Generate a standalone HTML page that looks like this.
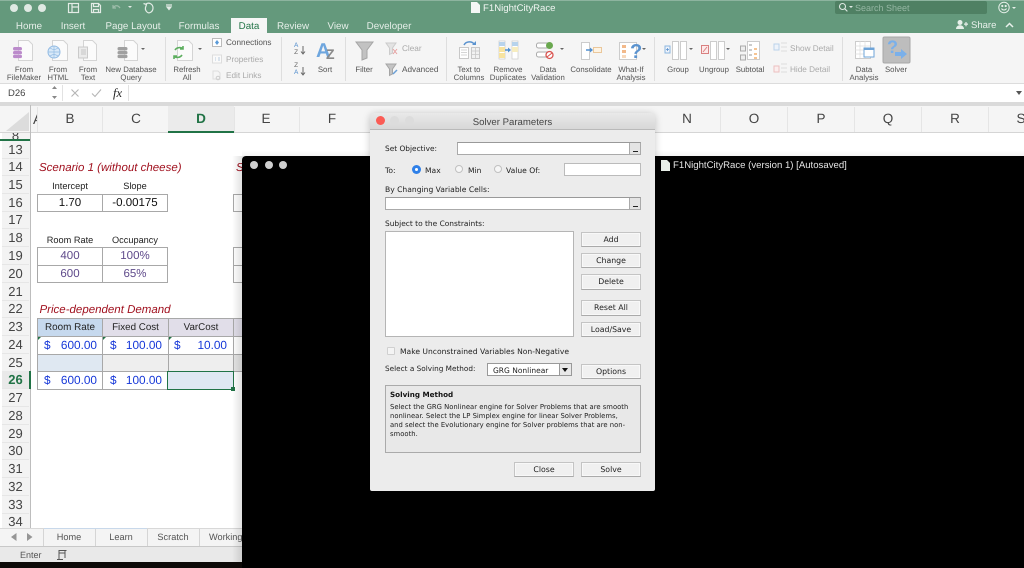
<!DOCTYPE html>
<html><head><meta charset="utf-8"><title>F1NightCityRace</title>
<style>
html{margin:0;padding:0;background:#000}
body{margin:0;padding:0;background:#000;width:1024px;height:568px;overflow:hidden;position:relative;font-family:"Liberation Sans",sans-serif;text-rendering:geometricPrecision;filter:blur(.3px)}
div,span{position:absolute;white-space:nowrap;box-sizing:border-box}
.tab{top:19.500px;font-size:9.800px;color:#e6efe9;transform:translateX(-50%);line-height:13px}
.rb{font-size:7.8px;color:#555;text-align:center;line-height:8.2px;transform:translateX(-50%);top:65.500px;white-space:pre}
.rs{font-size:8.2px;color:#555;line-height:10px}
.dim{color:#aaa}
.sep{top:37px;width:1px;height:44px;background:#dedede}
.ch{top:111px;font-size:13.5px;color:#444;transform:translateX(-50%);line-height:16px}
.rn{left:2px;width:27px;height:18px;text-align:center;font-size:13px;color:#444;line-height:18px;border-bottom:1px solid #e6e6e6}
.c{height:18px;border:1px solid #a8a8a8;font-size:11px;line-height:17px;text-align:center;color:#111;background:#fff}
.hd{line-height:18px}
.h{top:0;font-size:9.2px;color:#222;text-align:center;line-height:11px}
.p{color:#5f4a8b;font-size:11.5px}
.b{color:#1436d8;font-size:11.8px;text-align:right;padding-right:5px;line-height:17px}
.d{position:absolute;left:0;top:0}
.tri{width:0;height:0;border-top:3px solid #217346;border-right:3px solid transparent;left:0;top:0}
.st{font-size:9.2px;color:#555;transform:translateX(-50%);top:531px;line-height:12px}
.l{font-family:"DejaVu Sans",sans-serif;font-size:7.6px;color:#222;line-height:10px}
.m{font-size:6.830px}
.inp{background:#fff;border:1px solid #aaa;border-top-color:#999}
.btn{left:581px;width:60px;background:#f0f0f0;border:1px solid #c4c4c4;border-bottom-color:#aaa;font-family:"DejaVu Sans",sans-serif;font-size:7.8px;color:#222;text-align:center;box-shadow:inset 0 0 0 1px #f8f8f8}
.dd{width:11px;top:0;right:0;bottom:0;background:#e4e4e4;border-left:1px solid #aaa}
.dd:after{content:"";position:absolute;left:3px;bottom:2px;width:5px;height:1px;background:#222}
.rad{width:8px;height:8px;border-radius:50%;background:#f6f6f6;border:1px solid #c0c0c0}
</style></head><body>

<!-- excel window -->
<div style="left:0;top:0;width:1024px;height:562px;background:#fff"></div>

<!-- title & tabs -->
<div style="left:0;top:0;width:1024px;height:33px;background:#64997c;border-top:1px solid #8db49f"></div>
<div style="left:10px;top:4px;width:8px;height:8px;border-radius:50%;background:#dfe9e3"></div>
<div style="left:24px;top:4px;width:8px;height:8px;border-radius:50%;background:#dfe9e3"></div>
<div style="left:38px;top:4px;width:8px;height:8px;border-radius:50%;background:#dfe9e3"></div>
<svg class="d" width="180" height="18" fill="none" stroke="#e3ece6" stroke-width="1.2">
<rect x="68.5" y="3.5" width="10" height="9"/><path d="M72 3.500v9M72 7h6"/>
<path d="M91.500 3.500h7l2 2v7h-9zM93.500 3.500v3h5v-3M93.500 12.500v-3h5v3"/>
<path d="M113 8c2-3 5-3 7 0M113 5v3h3" stroke="#9dbdaa"/><path d="M128 6l2 2 2-2z" fill="#e3ece6" stroke="none"/>
<path d="M146 4c3-2 7 0 7 4s-4 6-6 4-2-4-1-6M143.500 3.500l3 1-1 3"/>
<path d="M166 5h6M167 7l2 2.500 2-2.500z" fill="#e3ece6"/>
</svg>
<svg class="d" style="left:471px;top:2px" width="9" height="11"><path d="M0 0h6l3 3v8H0z" fill="#f4f7f5"/></svg>
<div style="left:483px;top:2px;font-size:9.600px;color:#f2f6f3;line-height:13px">F1NightCityRace</div>
<div style="left:835px;top:1px;width:152px;height:13px;background:#4f8063;border-radius:2px"></div>
<svg class="d" style="left:838px;top:2px" width="16" height="11" fill="none" stroke="#dfe9e3" stroke-width="1.100"><circle cx="4.500" cy="4.500" r="3"/><path d="M6.800 6.800l2.600 2.600"/><path d="M11 4l2 2 2-2z" fill="#dfe9e3" stroke="none"/></svg>
<div style="left:855px;top:2px;font-size:9px;color:#95b6a3;line-height:12px">Search Sheet</div>
<svg class="d" style="left:998px;top:1px" width="22" height="13" fill="none" stroke="#e6efe9"><circle cx="6" cy="6.500" r="5.200"/><path d="M3.500 7.500c1 2 4 2 5 0"/><circle cx="4.300" cy="5" r=".6" fill="#e6efe9"/><circle cx="7.700" cy="5" r=".6" fill="#e6efe9"/><path d="M14 6l2 2 2-2z" fill="#e6efe9" stroke="none"/></svg>

<div style="left:231px;top:18px;width:36px;height:16px;background:#f6f6f6"></div>
<div class="tab" style="left:29px">Home</div>
<div class="tab" style="left:73px">Insert</div>
<div class="tab" style="left:133px">Page Layout</div>
<div class="tab" style="left:199px">Formulas</div>
<div class="tab" style="left:249px;color:#217346">Data</div>
<div class="tab" style="left:293px">Review</div>
<div class="tab" style="left:338px">View</div>
<div class="tab" style="left:389px">Developer</div>
<svg class="d" style="left:955px;top:19px" width="14" height="12" fill="#e6efe9"><circle cx="5" cy="3.500" r="2.500"/><path d="M1 10c0-5 8-5 8 0z"/><path d="M9 4.500h4v1.200H9zM10.400 3h1.200v4.200h-1.200z"/></svg>
<div style="left:971px;top:19px;font-size:9.500px;color:#e9f1ec;line-height:13px">Share</div>
<svg class="d" style="left:1005px;top:22px" width="9" height="7" fill="none" stroke="#e9f1ec" stroke-width="1.500"><path d="M1 5l3.500-3.500L8 5"/></svg>

<!-- ribbon -->
<div style="left:0;top:33px;width:1024px;height:51px;background:#f5f5f5;border-bottom:1px solid #dcdcdc"></div>
<div class="sep" style="left:165px"></div>
<div class="sep" style="left:281px"></div>
<div class="sep" style="left:345px"></div>
<div class="sep" style="left:446px"></div>
<div class="sep" style="left:654px"></div>
<div class="sep" style="left:842px"></div>

<svg class="d" width="1024" height="84" fill="none" stroke-width="1">
<!-- doc pages -->
<g stroke="#d4d4d4" fill="#fbfbfb">
<path d="M18.500 40.500h10l4 4v16h-14zM52.500 40.500h11l4 4v16h-15zM83.500 40.500h9l4 4v16h-13zM124.500 40.500h9l4 4v16h-13zM177.500 40.500h11l4 4v16h-15z"/>
</g>
<g fill="#bb8bcb"><rect x="13" y="47" width="9" height="3.500" rx="1.700"/><rect x="13" y="51" width="9" height="3.300" rx="1.600"/><rect x="13" y="54.800" width="9" height="3.300" rx="1.600"/></g>
<circle cx="54" cy="52" r="6" fill="#d9e9f8" stroke="#93bbe3"/><path d="M48 52h12M54 46v12M50 48c3 2 5 2 8 0M50 56c3-2 5-2 8 0" stroke="#93bbe3" stroke-width=".7"/>
<rect x="78.500" y="47" width="9" height="11" fill="#ebebeb" stroke="#cacaca"/><path d="M81 50h5M81 52h5M81 54h5" stroke="#c4c4c4"/>
<g fill="#a0a0a0"><rect x="117.500" y="47" width="10" height="3.500" rx="1.700"/><rect x="117.500" y="51" width="10" height="3.300" rx="1.600"/><rect x="117.500" y="54.800" width="10" height="3.300" rx="1.600"/></g>
<path d="M141 48l2 2 2-2z" fill="#666"/>
<path d="M175 50c2-3 6-3 8-1M183 46v3h-3" stroke="#5cae5e" stroke-width="1.600"/><path d="M182 55c-2 3-6 3-8 1M174 59v-3h3" stroke="#5cae5e" stroke-width="1.600"/>
<path d="M198 48l2 2 2-2z" fill="#666"/>
<rect x="212.500" y="38.500" width="9" height="8" fill="#fff" stroke="#bbb"/><path d="M217 40l2 2.500-2 2.500-2-2.500z" fill="#5a9bd8"/>
<rect x="212.500" y="55" width="9" height="8" fill="#fafafa" stroke="#ddd"/><path d="M215 58h1M215 60h1M218 58h2M218 60h2" stroke="#bcd"/>
<path d="M213 71h5l2 2v6h-7z" stroke="#ddd"/><circle cx="218" cy="78" r="1.800" stroke="#ccc"/>
<!-- sort -->
<path d="M303 46v8M301 51.500l2 2.500 2-2.500M303 67v8M301 72.500l2 2.500 2-2.500" stroke="#666"/>
<!-- filter -->
<path d="M356 42h17l-6 8v8l-5 2V50z" fill="#c2c2c2" stroke="#a5a5a5"/>
<path d="M386 43h10l-3.500 5v5l-3 1.500V48z" fill="#e3e3e3" stroke="#ccc"/><path d="M393 49l4 5M397 49l-4 5" stroke="#e6a0a0"/>
<path d="M386 64h10l-3.500 5v5l-3 1.500V69z" fill="#c4c4c4" stroke="#a5a5a5"/><path d="M393 74l4-4" stroke="#6a9fd6" stroke-width="1.500"/>
<!-- text to cols -->
<rect x="459.500" y="47.500" width="9" height="11" fill="#fff" stroke="#c8c8c8"/><rect x="471.500" y="47.500" width="8" height="11" fill="#f2f2f2" stroke="#c8c8c8"/><path d="M461 50h6M461 52.500h6M461 55h6M472 51h7M472 54.500h7M475.500 48v10" stroke="#c8c8c8" stroke-width=".8"/>
<path d="M464 45c2-4 8-4 10-1" stroke="#5b93cf" stroke-width="1.500"/><path d="M472 45h4v-4z" fill="#5b93cf"/>
<!-- dup -->
<rect x="499" y="41" width="6" height="18" fill="#fff" stroke="#ccc" stroke-width=".7"/><rect x="499" y="42" width="6" height="4" fill="#b7d3ec"/><rect x="499" y="47" width="6" height="5" fill="#f7e3a0"/><rect x="499" y="53" width="6" height="5" fill="#f7e3a0"/>
<rect x="512" y="41" width="6" height="18" fill="#fff" stroke="#ccc" stroke-width=".7"/><rect x="512" y="42" width="6" height="4" fill="#b7d3ec"/><rect x="512" y="47" width="6" height="5" fill="#f7edc0"/>
<path d="M505 50h4" stroke="#4f8fd0" stroke-width="1.500"/><path d="M508 47.500l3 2.500-3 2.500z" fill="#4f8fd0"/>
<!-- valid -->
<rect x="536.500" y="43" width="15" height="5" rx="2" fill="#fff" stroke="#aaa"/><circle cx="549.500" cy="45.500" r="3.500" fill="#6aa84f"/>
<rect x="536.500" y="52" width="15" height="5" rx="2" fill="#fff" stroke="#aaa"/><circle cx="549.500" cy="55" r="3.500" fill="#fff" stroke="#d9534f" stroke-width="1.300"/><path d="M547 57l5-4" stroke="#d9534f"/>
<path d="M560 48l2 2 2-2z" fill="#666"/>
<!-- consolidate -->
<rect x="581.500" y="42.500" width="8" height="17" fill="#fff" stroke="#ccc"/><path d="M586 50h5" stroke="#4f8fd0" stroke-width="1.500"/><path d="M590 47.500l3 2.500-3 2.500z" fill="#4f8fd0"/><rect x="593.500" y="47.500" width="8" height="5" fill="#fdf3e3" stroke="#eac79b"/>
<!-- what-if -->
<rect x="619.500" y="42.500" width="17" height="17" fill="#fff" stroke="#ccc"/><rect x="622" y="45" width="4" height="3" fill="#f2b98a"/><rect x="622" y="50" width="4" height="3" fill="#f2b98a"/><rect x="622" y="55" width="4" height="3" fill="#f7d9bd"/>
<path d="M642 48l2 2 2-2z" fill="#666"/>
<!-- group -->
<rect x="665" y="46" width="5" height="7" fill="#eef3fa" stroke="#8cb6e0"/><path d="M666 49.500h3M667.500 48v3" stroke="#5b93cf" stroke-width=".8"/><rect x="672.500" y="41.500" width="6" height="18" fill="#fff" stroke="#ccc"/><rect x="680.500" y="41.500" width="6" height="18" fill="#fff" stroke="#ccc"/><path d="M689 48l2 2 2-2z" fill="#666"/>
<!-- ungroup -->
<rect x="701.500" y="45.500" width="7" height="8" fill="#fdeaea" stroke="#d98080"/><path d="M703 52l4-5" stroke="#d98080"/><rect x="710.500" y="41.500" width="6" height="18" fill="#fff" stroke="#ccc"/><rect x="718.500" y="41.500" width="6" height="18" fill="#fff" stroke="#ccc"/><path d="M726 48l2 2 2-2z" fill="#666"/>
<!-- subtotal -->
<rect x="740.500" y="46" width="5" height="5" fill="#eee" stroke="#aaa"/><rect x="740.500" y="55" width="5" height="5" fill="#eee" stroke="#aaa"/><rect x="747.500" y="41.500" width="12" height="18" fill="#fff" stroke="#ccc"/><path d="M749 45h3M749 50h3M749 55h3" stroke="#999"/><path d="M754 49h3M754 54h3M754 58h3" stroke="#f0a050" stroke-width="1.300"/>
<!-- show hide -->
<rect x="774" y="44" width="5" height="6" fill="#eef3fa" stroke="#bcd3ea"/><path d="M781 43h6M781 47h6M781 51h6" stroke="#ddd"/>
<rect x="774" y="66" width="5" height="6" fill="#fbeeee" stroke="#ecc0c0"/><path d="M781 64h6M781 68h6M781 72h6" stroke="#ddd"/>
<!-- data analysis -->
<rect x="855.500" y="41.500" width="15" height="17" fill="#fff" stroke="#ccc"/><path d="M855 46h15M855 50h15M855 54h15M860 41v17M865 41v17" stroke="#ddd" stroke-width=".7"/>
<rect x="864" y="48" width="10" height="9" fill="#fff" stroke="#6ea4d8"/><rect x="864" y="48" width="10" height="2" fill="#6ea4d8"/>
<!-- solver -->
<rect x="883" y="37" width="27" height="26" rx="1.500" fill="#bdbdbd" stroke="#a8a8a8"/>
<path d="M899 57h-6v-4h6v-3l6 5-6 5z" transform="translate(2 -1)" fill="#7ab0ea"/>
</svg>
<div style="left:316px;top:40px;font-size:20px;font-weight:bold;color:#6ea6de;line-height:22px">A</div>
<div style="left:326px;top:46px;font-size:14px;font-weight:bold;color:#8a8a8a;line-height:16px">Z</div>
<div style="left:294px;top:43px;font-size:6.500px;line-height:6.500px;color:#666;text-align:center;white-space:pre"><span style="position:static;color:#5b93cf">A</span>
Z</div>
<div style="left:294px;top:63px;font-size:6.500px;line-height:6.500px;color:#666;text-align:center;white-space:pre">Z
<span style="position:static;color:#5b93cf">A</span></div>
<div style="left:630px;top:41px;font-size:20px;font-weight:bold;color:#5b93cf;line-height:22px">?</div>
<div style="left:887px;top:37px;font-size:18px;font-weight:bold;color:#7ab0ea;line-height:20px">?</div>

<div class="rb" style="left:24px">From
FileMaker</div>
<div class="rb" style="left:58px">From
HTML</div>
<div class="rb" style="left:88px">From
Text</div>
<div class="rb" style="left:131px">New Database
Query</div>
<div class="rb" style="left:187px">Refresh
All</div>
<div class="rs" style="left:226px;top:38px">Connections</div>
<div class="rs dim" style="left:226px;top:55px">Properties</div>
<div class="rs dim" style="left:226px;top:71px">Edit Links</div>
<div class="rb" style="left:325px">Sort</div>
<div class="rb" style="left:364px">Filter</div>
<div class="rs dim" style="left:402px;top:44px">Clear</div>
<div class="rs" style="left:402px;top:65px">Advanced</div>
<div class="rb" style="left:469px">Text to
Columns</div>
<div class="rb" style="left:508px">Remove
Duplicates</div>
<div class="rb" style="left:548px">Data
Validation</div>
<div class="rb" style="left:591px">Consolidate</div>
<div class="rb" style="left:631px">What-If
Analysis</div>
<div class="rb" style="left:678px">Group</div>
<div class="rb" style="left:714px">Ungroup</div>
<div class="rb" style="left:750px">Subtotal</div>
<div class="rs dim" style="left:790px;top:44px">Show Detail</div>
<div class="rs dim" style="left:790px;top:65px">Hide Detail</div>
<div class="rb" style="left:864px">Data
Analysis</div>
<div class="rb" style="left:896px">Solver</div>

<!-- formula bar -->
<div style="left:0;top:84px;width:1024px;height:18px;background:#fff"></div>
<div style="left:8px;top:88px;font-size:9.500px;color:#444;line-height:12px">D26</div>
<div style="left:62px;top:85px;width:1px;height:16px;background:#e2e2e2"></div>
<div style="left:128px;top:85px;width:1px;height:16px;background:#e2e2e2"></div>
<svg class="d" style="top:84px" width="130" height="18" fill="none" stroke="#b5b5b5" stroke-width="1.100">
<path d="M52 5l2.500-3 2.500 3zM52 12l2.500 3 2.500-3z" fill="#888" stroke="none"/>
<path d="M71.500 5.500l7 7M78.500 5.500l-7 7M92 9.500l3 3 6-7"/></svg>
<div style="left:113px;top:86px;font-family:'Liberation Serif',serif;font-style:italic;font-size:12.500px;color:#222;line-height:14px">fx</div>
<svg class="d" style="left:1015px;top:90px" width="8" height="6"><path d="M1 1h6L4 5z" fill="#555"/></svg>
<div style="left:0;top:102px;width:1024px;height:4px;background:#dadada"></div>

<!-- col header -->
<div style="left:0;top:106px;width:1024px;height:27px;background:#f5f5f5;border-bottom:1px solid #d5d5d5"></div>
<svg class="d" style="top:106px" width="36" height="27"><path d="M29 6v19H6z" fill="#dcdcdc"/></svg>
<div style="left:30px;top:105px;width:1px;height:423px;background:#bdbdbd"></div>
<div style="left:168px;top:106px;width:66px;height:27px;background:#ebebeb"></div>
<div style="left:168px;top:131px;width:66px;height:2px;background:#217346"></div>
<div style="left:37px;top:107px;width:1px;height:25px;background:#e5e5e5"></div>
<div style="left:102px;top:107px;width:1px;height:25px;background:#e5e5e5"></div>
<div style="left:299px;top:107px;width:1px;height:25px;background:#e5e5e5"></div>
<div style="left:720px;top:107px;width:1px;height:25px;background:#e5e5e5"></div>
<div style="left:787px;top:107px;width:1px;height:25px;background:#e5e5e5"></div>
<div style="left:854px;top:107px;width:1px;height:25px;background:#e5e5e5"></div>
<div style="left:921px;top:107px;width:1px;height:25px;background:#e5e5e5"></div>
<div style="left:988px;top:107px;width:1px;height:25px;background:#e5e5e5"></div>
<div style="left:234px;top:107px;width:1px;height:25px;background:#e5e5e5"></div>
<div style="left:33px;top:111px;width:4px;height:16px;overflow:hidden;font-size:14px;color:#444;line-height:16px">A</div>
<div class="ch" style="left:70px">B</div>
<div class="ch" style="left:136px">C</div>
<div class="ch" style="left:201px;color:#217346;font-weight:bold">D</div>
<div class="ch" style="left:266px">E</div>
<div class="ch" style="left:332px">F</div>
<div class="ch" style="left:687px">N</div>
<div class="ch" style="left:754px">O</div>
<div class="ch" style="left:821px">P</div>
<div class="ch" style="left:888px">Q</div>
<div class="ch" style="left:955px">R</div>
<div class="ch" style="left:1021px">S</div>

<!-- rows -->
<div style="left:2px;top:133px;width:28px;height:395px;background:#f3f3f3"></div>
<div style="left:2px;top:133px;width:27px;height:6px;overflow:hidden;text-align:center;font-size:13px;color:#444;line-height:6px">8</div>
<div style="left:0;top:139px;width:30px;height:2px;background:#217346"></div>
<div class="rn" style="top:140.500px">13</div>
<div class="rn" style="top:158px">14</div>
<div class="rn" style="top:176px">15</div>
<div class="rn" style="top:193.500px">16</div>
<div class="rn" style="top:211px">17</div>
<div class="rn" style="top:229px">18</div>
<div class="rn" style="top:247px">19</div>
<div class="rn" style="top:265px">20</div>
<div class="rn" style="top:283px">21</div>
<div class="rn" style="top:300px">22</div>
<div class="rn" style="top:318px">23</div>
<div class="rn" style="top:336px">24</div>
<div class="rn" style="top:354px">25</div>
<div class="rn" style="top:371px;color:#217346;font-weight:bold;background:#e9e9e9">26</div>
<div style="left:29px;top:371px;width:2px;height:18px;background:#217346"></div>
<div class="rn" style="top:389px">27</div>
<div class="rn" style="top:407px">28</div>
<div class="rn" style="top:425px">29</div>
<div class="rn" style="top:442px">30</div>
<div class="rn" style="top:460px">31</div>
<div class="rn" style="top:478px">32</div>
<div class="rn" style="top:496px">33</div>
<div class="rn" style="top:513px;height:15px;border:0;overflow:hidden">34</div>

<!-- cells -->
<div style="left:39px;top:161px;font-size:11.500px;font-style:italic;color:#a0101e;line-height:15px">Scenario 1 (without cheese)</div>
<div style="left:236px;top:161px;width:6px;overflow:hidden;font-size:11.500px;font-style:italic;color:#a0101e;line-height:15px">S</div>
<div class="h" style="left:37px;top:181px;width:66px">Intercept</div>
<div class="h" style="left:102px;top:181px;width:66px">Slope</div>
<div class="c" style="left:37px;top:194px;width:66px;height:18px;font-size:11.500px">1.70</div>
<div class="c" style="left:102px;top:194px;width:66px;height:18px;font-size:11.500px">-0.00175</div>
<div class="h" style="left:37px;top:235px;width:66px">Room Rate</div>
<div class="h" style="left:102px;top:235px;width:66px">Occupancy</div>
<div class="c p" style="left:37px;top:247px;width:66px;height:19px">400</div>
<div class="c p" style="left:102px;top:247px;width:66px;height:19px">100%</div>
<div class="c p" style="left:37px;top:265px;width:66px;height:18px">600</div>
<div class="c p" style="left:102px;top:265px;width:66px;height:18px">65%</div>
<div class="c" style="left:233px;top:194px;width:12px;border-right:0"></div>
<div class="c" style="left:233px;top:247px;width:12px;height:19px;border-right:0"></div>
<div class="c" style="left:233px;top:265px;width:12px;border-right:0"></div>

<div style="left:39.500px;top:303px;font-size:11.500px;font-style:italic;color:#a0101e;line-height:15px">Price-dependent Demand</div>
<div class="c hd" style="left:37px;top:318px;width:66px;height:19px;background:#c6d9ee;font-size:9.900px;color:#222">Room Rate</div>
<div class="c hd" style="left:102px;top:318px;width:67px;height:19px;background:#e1dee9;font-size:9.800px;color:#222">Fixed Cost</div>
<div class="c hd" style="left:168px;top:318px;width:66px;height:19px;background:#e1dee9;font-size:9.800px;color:#222">VarCost</div>
<div class="c" style="left:233px;top:318px;width:12px;height:19px;background:#e1dee9;border-right:0"></div>
<div class="c b" style="left:37px;top:336px;width:66px;height:19px">600.00<span style="left:6px;top:0">$</span><span class="tri"></span></div>
<div class="c b" style="left:102px;top:336px;width:67px;height:19px;padding-right:6px">100.00<span style="left:7px;top:0">$</span><span class="tri"></span></div>
<div class="c b" style="left:168px;top:336px;width:66px;height:19px;padding-right:6px">10.00<span style="left:5px;top:0">$</span><span class="tri"></span></div>
<div class="c" style="left:233px;top:336px;width:12px;height:19px;border-right:0"></div>
<div class="c" style="left:37px;top:354px;width:66px;height:18px;background:#dfe8f2"></div>
<div class="c" style="left:102px;top:354px;width:67px;height:18px;background:#eeeeee"></div>
<div class="c" style="left:168px;top:354px;width:66px;height:18px;background:#eeeeee"></div>
<div class="c" style="left:233px;top:354px;width:12px;height:18px;background:#e4e4e4;border-right:0"></div>
<div class="c b" style="left:37px;top:371px;width:66px;height:19px">600.00<span style="left:6px;top:0">$</span></div>
<div class="c b" style="left:102px;top:371px;width:67px;height:19px;padding-right:6px">100.00<span style="left:7px;top:0">$</span></div>
<div class="c" style="left:167px;top:371px;width:67px;height:19px;background:#dfe8f2;border:1.500px solid #217346"></div>
<div style="left:231px;top:387px;width:4px;height:4px;background:#217346"></div>

<!-- sheet tabs -->
<div style="left:0;top:528px;width:245px;height:19px;background:#f4f4f4;border-top:1px solid #d8d8d8;border-bottom:1px solid #c8c8c8"></div>
<div style="left:43px;top:529px;width:1px;height:17px;background:#d5d5d5"></div>
<div style="left:95px;top:529px;width:1px;height:17px;background:#d5d5d5"></div>
<div style="left:147px;top:529px;width:1px;height:17px;background:#d5d5d5"></div>
<div style="left:199px;top:529px;width:1px;height:17px;background:#d5d5d5"></div>
<div style="left:44px;top:528px;width:103px;height:1px;background:#c8d8ea"></div>
<svg class="d" style="top:532px" width="36" height="12" fill="#969696"><path d="M16.500 1v8l-5.500-4zM27 1v8l5.500-4z"/></svg>
<div class="st" style="left:69px">Home</div>
<div class="st" style="left:121px">Learn</div>
<div class="st" style="left:173px">Scratch</div>
<div class="st" style="left:209px;transform:none;width:33px;overflow:hidden">Working</div>
<div style="left:0;top:547px;width:245px;height:15px;background:#e9e9e9"></div>
<div style="left:20px;top:549px;font-size:9px;color:#555;line-height:12px">Enter</div>
<svg class="d" style="left:56px;top:549px" width="12" height="12" fill="none" stroke="#555"><path d="M2.500 1.500h8M3 1v3M9 1v8M3 4h6M3 4v6M1 10.500h6"/></svg>

<!-- black window -->
<div style="left:232px;top:156px;width:12px;height:406px;background:linear-gradient(90deg,rgba(0,0,0,0),rgba(0,0,0,.14))"></div>
<div style="left:242px;top:150px;width:782px;height:6px;background:linear-gradient(180deg,rgba(0,0,0,0),rgba(0,0,0,.05))"></div>
<div style="left:242px;top:156px;width:782px;height:412px;background:#000;border-radius:4px 0 0 0"></div>
<div style="left:0;top:562px;width:242px;height:6px;background:#0d0a08"></div>
<div style="left:250px;top:161px;width:8px;height:8px;border-radius:50%;background:#cfcfcf"></div>
<div style="left:265px;top:161px;width:8px;height:8px;border-radius:50%;background:#cfcfcf"></div>
<div style="left:279px;top:161px;width:8px;height:8px;border-radius:50%;background:#cfcfcf"></div>
<svg class="d" style="left:661px;top:160px" width="9" height="11"><path d="M0 0h6l3 3v8H0z" fill="#e8efe8"/></svg>
<div style="left:673px;top:159px;font-size:9.600px;color:#e4e4e4;line-height:13px">F1NightCityRace (version 1) [Autosaved]</div>

<!-- dialog -->
<div style="left:370px;top:113px;width:285px;height:378px;background:#ececec;border-radius:5px 5px 2px 2px;box-shadow:0 1px 8px rgba(0,0,0,.22)"></div>
<div style="left:370px;top:113px;width:285px;height:17px;background:linear-gradient(#e9e9e9,#d7d7d7);border-radius:5px 5px 0 0;border-bottom:1px solid #b9b9b9"></div>
<div style="left:376px;top:116px;width:9px;height:9px;border-radius:50%;background:#fb5c55"></div>
<div style="left:390px;top:116px;width:9px;height:9px;border-radius:50%;background:#dcdcdc"></div>
<div style="left:405px;top:116px;width:9px;height:9px;border-radius:50%;background:#dcdcdc"></div>
<div style="left:370px;top:115.500px;width:285px;text-align:center;font-size:9.600px;color:#444;line-height:13px">Solver Parameters</div>

<div class="l" style="left:385px;top:144px;font-size:7.400px">Set Objective:</div>
<div class="inp" style="left:457px;top:142px;width:184px;height:13px"><div class="dd"></div></div>
<div class="l" style="left:385px;top:166px">To:</div>
<div style="left:412px;top:165px;width:9px;height:9px;border-radius:50%;background:#2f80e8"></div>
<div style="left:415px;top:168px;width:3px;height:3px;border-radius:50%;background:#fff"></div>
<div class="l" style="left:425px;top:166px">Max</div>
<div class="rad" style="left:455px;top:165px"></div>
<div class="l" style="left:468px;top:166px">Min</div>
<div class="rad" style="left:494px;top:165px"></div>
<div class="l" style="left:506px;top:166px">Value Of:</div>
<div class="inp" style="left:564px;top:163px;width:77px;height:13px;border-color:#bbb"></div>
<div class="l" style="left:385px;top:185px">By Changing Variable Cells:</div>
<div class="inp" style="left:385px;top:197px;width:256px;height:13px"><div class="dd"></div></div>
<div class="l" style="left:385px;top:219px;font-size:7.450px">Subject to the Constraints:</div>
<div class="inp" style="left:385px;top:231px;width:189px;height:106px;border-color:#b5b5b5"></div>
<div class="btn" style="top:232px;height:15px;line-height:13px">Add</div>
<div class="btn" style="top:253px;height:15px;line-height:13px">Change</div>
<div class="btn" style="top:274px;height:16px;line-height:14px">Delete</div>
<div class="btn" style="top:300px;height:16px;line-height:14px">Reset All</div>
<div class="btn" style="top:322px;height:15px;line-height:13px">Load/Save</div>
<div style="left:387px;top:347px;width:8px;height:8px;background:#f4f4f4;border:1px solid #d0d0d0;border-radius:1px"></div>
<div class="l" style="left:400px;top:347px">Make Unconstrained Variables Non-Negative</div>
<div class="l" style="left:385px;top:364px;font-size:7.300px">Select a Solving Method:</div>
<div class="inp" style="left:487px;top:363px;width:85px;height:13px;border-color:#999;padding-left:5px;line-height:13px;font-family:'DejaVu Sans',sans-serif;font-size:7.500px;color:#222">GRG Nonlinear
<div style="right:0;top:0;width:12px;height:11px;background:#e8e8e8;border-left:1px solid #999"></div>
<svg class="d" style="left:73px;top:3px" width="9" height="6"><path d="M1 1h6L4 5z" fill="#111"/></svg></div>
<div class="btn" style="top:364px;height:15px;line-height:13px">Options</div>
<div style="left:385px;top:385px;width:256px;height:68px;background:#e8e8e8;border:1px solid #aaa"></div>
<div class="l" style="left:390px;top:390px;font-weight:bold;font-size:7.200px;color:#111">Solving Method</div>
<div class="l m" style="left:390px;top:402px">Select the GRG Nonlinear engine for Solver Problems that are smooth</div>
<div class="l m" style="left:390px;top:411px">nonlinear. Select the LP Simplex engine for linear Solver Problems,</div>
<div class="l m" style="left:390px;top:420px">and select the Evolutionary engine for Solver problems that are non-</div>
<div class="l m" style="left:390px;top:429px">smooth.</div>
<div class="btn" style="left:514px;top:462px;height:15px;line-height:13px">Close</div>
<div class="btn" style="top:462px;height:15px;line-height:13px">Solve</div>
</body></html>
